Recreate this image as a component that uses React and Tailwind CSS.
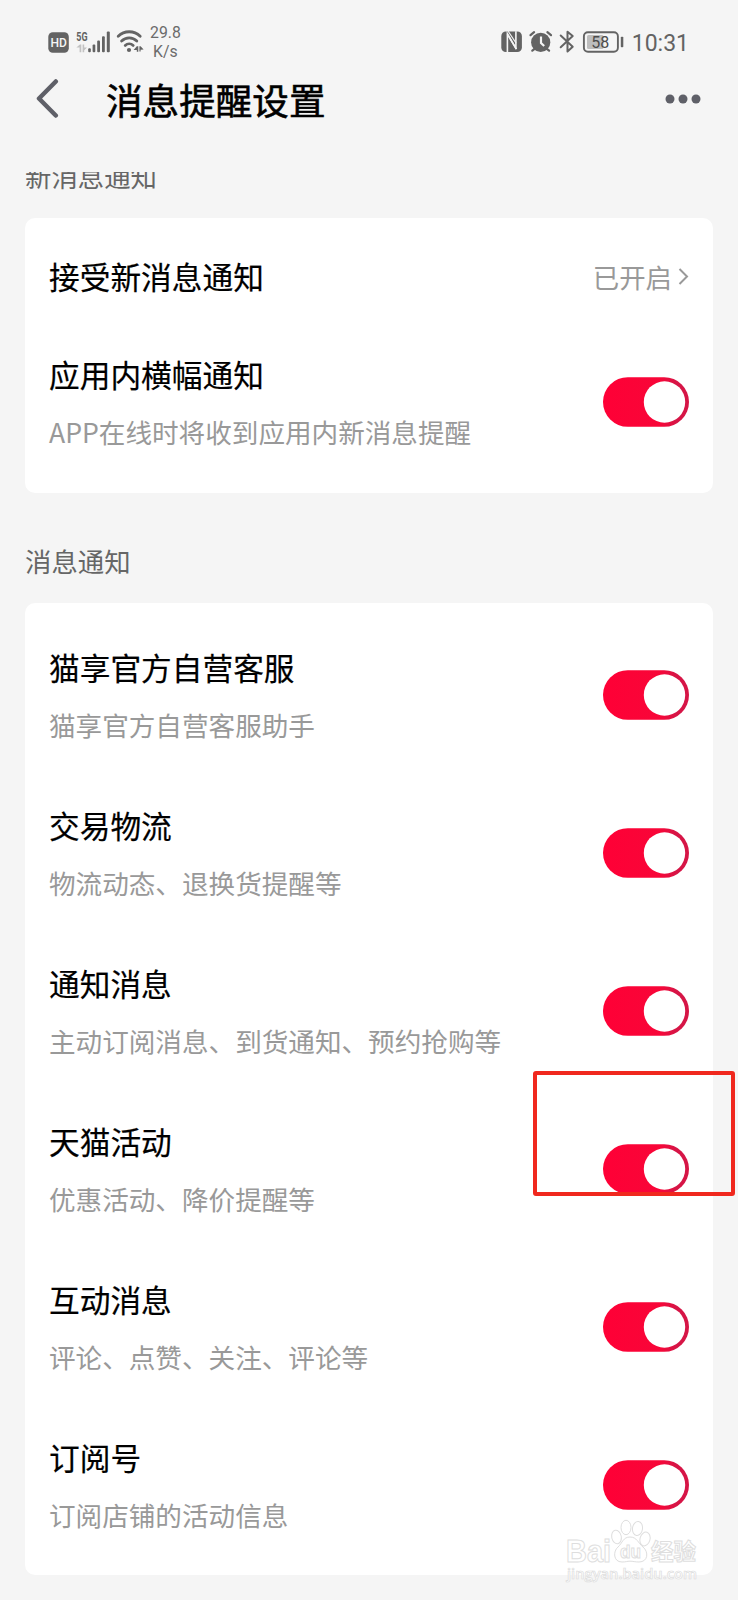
const CJK = "font-['Noto_Sans_CJK_SC',sans-serif]";

const messageRows = [
  { title: '猫享官方自营客服', desc: '猫享官方自营客服助手' },
  { title: '交易物流', desc: '物流动态、退换货提醒等' },
  { title: '通知消息', desc: '主动订阅消息、到货通知、预约抢购等' },
  { title: '天猫活动', desc: '优惠活动、降价提醒等', highlighted: true },
  { title: '互动消息', desc: '评论、点赞、关注、评论等' },
  { title: '订阅号', desc: '订阅店铺的活动信息' },
];

function NetworkIcons() {
  return (
    <svg width="96" height="24" viewBox="48 30 96 24" fill="#636363" className="shrink-0">
      <rect x="48.3" y="32.3" width="20.5" height="20.5" rx="4.5" />
      <text x="58.6" y="47.4" textAnchor="middle" fontFamily="Roboto, sans-serif" fontSize="13.6" fontWeight="500" fill="#f5f5f5" textLength="16.4" lengthAdjust="spacingAndGlyphs">HD</text>
      <text x="76.3" y="40.6" fontFamily="Roboto, sans-serif" fontSize="13" fontWeight="700" textLength="11.2" lengthAdjust="spacingAndGlyphs">5G</text>
      <g fill="#c2c2c2">
        <path d="M79.6 44.6h1.7v7.6h-1.7zM76.4 47.6l3.4-3v3z" />
        <path d="M82.6 44.6h1.6v7.6h-1.6zM84 47.6h3l-3 3z" />
      </g>
      <rect x="88.2" y="48.2" width="2.6" height="4" rx="1" />
      <rect x="92.6" y="44.6" width="2.7" height="7.6" rx="1" />
      <rect x="97.2" y="40.4" width="2.8" height="11.8" rx="1" />
      <rect x="102" y="36.2" width="2.8" height="16" rx="1" />
      <rect x="106.8" y="31.4" width="3" height="20.8" rx="1" />
      <g fill="none" stroke="#636363" strokeWidth="2.8" strokeLinecap="round">
        <path d="M118.2 36.2a15.8 15.8 0 0 1 22 0" />
        <path d="M121.6 41a10.8 10.8 0 0 1 15.2 0" />
        <path d="M125.2 45.4a5.8 5.8 0 0 1 8 0" />
      </g>
      <circle cx="129" cy="50" r="2.1" />
      <path d="M136.8 46.2h1.5v5.6h-1.500v-1.8h-3.2zM139.4 46.200h1.200l3 3.2-3 .4v1.600h-1.200z" />
    </svg>
  );
}

function DeviceIcons() {
  return (
    <svg width="124" height="24" viewBox="500 30 124 24" fill="#636363" className="shrink-0">
      <rect x="501.3" y="31.4" width="20.6" height="20.6" rx="4.5" />
      <path d="M507.4 52V33.800l9 15.400" fill="none" stroke="#f5f5f5" strokeWidth="1.600" />
      <path d="M515.900 31.200v17.800M507.400 34.200l9 15" fill="none" stroke="#f5f5f5" strokeWidth="1.600" />
      <path d="M508 31l8 12" fill="none" stroke="#f5f5f5" strokeWidth="1.200" />
      <circle cx="540.7" cy="42.4" r="9.6" />
      <path d="M530.5 35.2l3.6-3M551 35.2l-3.6-3M534.6 48.8l-2.3 1.9M546.8 48.8l2.3 1.9" stroke="#636363" strokeWidth="2.2" strokeLinecap="round" />
      <path d="M541 36.6v6.4l3.2 3" fill="none" stroke="#f5f5f5" strokeWidth="2.2" />
      <path d="M560.7 35.5l12 11.2-5.2 4.8V31.8l5.2 4.3-12 11.1" fill="none" stroke="#636363" strokeWidth="2" strokeLinejoin="round" strokeLinecap="round" />
      <rect x="583.9" y="32.2" width="34" height="19.5" rx="4" fill="none" stroke="#636363" strokeWidth="1.9" />
      <rect x="587" y="35" width="16.5" height="14" rx="1.5" fill="#bdbdbd" />
      <text x="600.2" y="48.3" textAnchor="middle" fontFamily="Roboto, sans-serif" fontSize="17" fill="#4c4c4c" textLength="18" lengthAdjust="spacingAndGlyphs">58</text>
      <rect x="620.8" y="36.8" width="2.5" height="10.4" rx="0.8" />
    </svg>
  );
}

function Toggle() {
  return (
    <svg width="86" height="50" viewBox="0 0 86 50" className="shrink-0">
      <defs>
        <linearGradient id="track" x1="0" x2="1" y1="0" y2="0">
          <stop offset="0" stopColor="#ff0036" />
          <stop offset="0.66" stopColor="#f80638" />
          <stop offset="0.85" stopColor="#d61546" />
          <stop offset="1" stopColor="#d61546" />
        </linearGradient>
      </defs>
      <rect y="0.2" width="86" height="49.600" rx="24.800" fill="url(#track)" />
      <circle cx="61.500" cy="25" r="20.700" fill="#fff" />
    </svg>
  );
}

function SettingRow({ title, desc, highlighted }) {
  return (
    <div className="relative flex h-[158px] items-center justify-between">
      <div className="flex flex-col gap-[18px] pt-[2px]">
        <div className="text-[30.7px] leading-10 text-black [-webkit-text-stroke:0.2px_black]">{title}</div>
        <div className="text-[26.6px] leading-10 text-[#999]">{desc}</div>
      </div>
      <Toggle />
      {highlighted && (
        <div className="absolute top-[-19px] -right-[46px] h-[125px] w-[202px] rounded-[3px] border-4 border-[#f0281e]" />
      )}
    </div>
  );
}

function SectionLabel({ children }) {
  return <div className="flex h-[110px] items-end pb-[22px] text-[26.4px] leading-10 text-[#666]">{children}</div>;
}

function Watermark() {
  return (
    <svg width="136" height="66" viewBox="564 1518 136 66" className="absolute top-[1518px] left-[564px]" fill="#fff" stroke="#dedede" strokeWidth="1">
      <text x="566" y="1561.5" fontFamily="'Liberation Sans', sans-serif" fontSize="30.500" fontWeight="700" textLength="45" lengthAdjust="spacingAndGlyphs">Bai</text>
      <ellipse cx="616.5" cy="1537" rx="4.8" ry="6.8" transform="rotate(-12 616.5 1537)" />
      <ellipse cx="626" cy="1527.5" rx="5" ry="7.2" />
      <ellipse cx="637.5" cy="1528.5" rx="5" ry="7" transform="rotate(8 637.5 1528.5)" />
      <ellipse cx="645" cy="1539" rx="5" ry="7" transform="rotate(16 645 1539)" />
      <path d="M630 1537c-7 0-7.500 6-12 10-5 4-5 15 4 15 4 0 5-.8 8-.8s5 .8 9 .8c9 0 10-10 4-15-5-4-6-10-13-10z" />
      <text x="620" y="1558" fontFamily="'Liberation Sans', sans-serif" fontSize="19" fontWeight="700" textLength="21" lengthAdjust="spacingAndGlyphs">du</text>
      <text x="651" y="1559.500" fontFamily="'Noto Sans CJK SC', sans-serif" fontSize="22.500" fontWeight="700">经验</text>
      <text x="567" y="1578.500" fontFamily="'Open Sans', sans-serif" fontSize="15" fontWeight="600" strokeWidth="0.7" stroke="#dcdcdc" textLength="130" lengthAdjust="spacingAndGlyphs">jingyan.baidu.com</text>
    </svg>
  );
}

export default function App() {
  return (
    <div className={`relative flex h-[1600px] w-[738px] flex-col overflow-hidden bg-[#f5f5f5] ${CJK}`}>
      <header className="h-[172px] shrink-0">
        <div className="flex h-[72px] items-center justify-between pt-3 pr-[49px] pl-12 font-[Roboto,sans-serif] text-[#6b6b6b]">
          <div className="flex items-center gap-[6px]">
            <NetworkIcons />
            <div className="flex flex-col pt-px text-center text-[15.800px] leading-[18.500px]">
              <span>29.8</span>
              <span>K/s</span>
            </div>
          </div>
          <div className="flex items-center gap-[8px]">
            <DeviceIcons />
            <span className="pt-[3px] text-[23px] leading-6 text-[#636363]">10:31</span>
          </div>
        </div>
        <div className="flex h-[54px] items-center pr-[37px] pl-[36px]">
          <svg width="24" height="42" viewBox="0 0 24 42" fill="none" stroke="#5f6068" strokeWidth="4.500" strokeLinecap="round" strokeLinejoin="round">
            <path d="M19.800 3.500 3 20.500 19.800 37.500" />
          </svg>
          <h1 className="ml-[46px] pt-px text-[36.600px] leading-[54px] font-normal text-black [-webkit-text-stroke:0.6px_black]">消息提醒设置</h1>
          <svg width="36" height="10" viewBox="0 0 36 10" fill="#5f6068" className="ml-auto">
            <circle cx="5" cy="5" r="4.500" />
            <circle cx="18" cy="5" r="4.500" />
            <circle cx="31" cy="5" r="4.500" />
          </svg>
        </div>
      </header>
      <main className="min-h-0 flex-1 overflow-hidden px-[25px]">
        <div className="-mt-16">
          <SectionLabel>新消息通知</SectionLabel>
          <section className="rounded-[10px] bg-white px-6 py-3">
            <div className="flex h-[93px] items-center justify-between">
              <div className="pb-[2px] text-[30.7px] leading-10 text-black [-webkit-text-stroke:0.2px_black]">接受新消息通知</div>
              <div className="flex items-center gap-[6px] text-[26.4px] leading-10 text-[#999]">
                <span>已开启</span>
                <svg width="11" height="17" viewBox="0 0 11 17" fill="none" stroke="#999" strokeWidth="2">
                  <path d="M1.500 1 9 8.500 1.500 16" />
                </svg>
              </div>
            </div>
            <SettingRow title="应用内横幅通知" desc="APP在线时将收到应用内新消息提醒" />
          </section>
          <SectionLabel>消息通知</SectionLabel>
          <section className="rounded-[10px] bg-white px-6 pt-[13px] pb-[11px]">
            {messageRows.map((row) => (
              <SettingRow key={row.title} {...row} />
            ))}
          </section>
        </div>
      </main>
      <Watermark />
    </div>
  );
}
